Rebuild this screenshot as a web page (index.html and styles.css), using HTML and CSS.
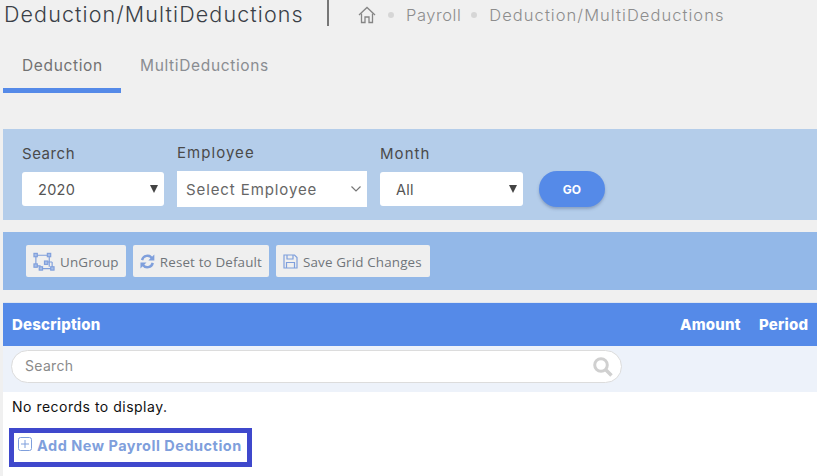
FILE: index.html
```html
<!DOCTYPE html>
<html lang="en">
<head>
<meta charset="utf-8">
<title>Deduction/MultiDeductions</title>
<link rel="stylesheet" href="styles.css">
</head>
<body>
<header class="head">
  <h1 class="title">Deduction/MultiDeductions</h1>
  <span class="divider"></span>
  <nav class="crumbs">
    <svg class="home" width="18" height="18" viewBox="0 0 18 18" fill="none" stroke="#858585" stroke-width="1.300"><path d="M1 9 9 1.5 17 9"/><path d="M3.5 7.5V16.500H7V11h4v5.500h3.500V7.500"/></svg>
    <span class="dot"></span><span>Payroll</span><span class="dot"></span><span class="crumb-long">Deduction/MultiDeductions</span>
  </nav>
</header>
<div class="tabs">
  <div class="tab active">Deduction</div>
  <div class="tab">MultiDeductions</div>
</div>
<section class="filters">
  <div class="field">
    <label class="lbl">Search</label>
    <div class="sel w142"><span>2020</span><i class="tri"></i></div>
  </div>
  <div class="field up">
    <label class="lbl lbl-wide">Employee</label>
    <div class="sel emp"><span>Select Employee</span>
      <svg width="10" height="6" viewBox="0 0 10 6" fill="none" stroke="#777" stroke-width="1.200"><path d="M.5.500 5 5 9.500.500"/></svg>
    </div>
  </div>
  <div class="field">
    <label class="lbl lbl-wide">Month</label>
    <div class="sel w143"><span>All</span><i class="tri"></i></div>
  </div>
  <button class="go">GO</button>
</section>
<section class="toolbar">
  <button class="tbtn tbtn-ungroup">
    <svg width="22" height="19" viewBox="0 0 23 19" fill="none" stroke="#7f9fdc" stroke-width="1.200"><path d="M3 3h14M3 3v11M3 14h5M17 3v12M8 17h12M20 10v7M12 10h8"/><g fill="#a9bfe8"><rect x="1" y="1" width="3.500" height="3.500"/><rect x="15" y="1" width="3.500" height="3.500"/><rect x="1" y="12" width="3.500" height="3.500"/><rect x="6.500" y="15" width="3.500" height="3.500"/><rect x="18.500" y="15" width="3.500" height="3.500"/><rect x="12" y="9" width="3.500" height="3.500"/></g></svg>
    UnGroup
  </button>
  <button class="tbtn tbtn-reset">
    <svg width="15" height="15" viewBox="0 0 16 16" fill="none" stroke="#7f9fdc" stroke-width="2.600"><path d="M2.200 6.500A6 6 0 0 1 13 4.500M13.800 9.500A6 6 0 0 1 3 11.500"/><path d="M15.500 .5v6.500H9zM.5 15.500V9H7z" fill="#7f9fdc" stroke="none"/></svg>
    Reset to Default
  </button>
  <button class="tbtn tbtn-save">
    <svg width="15" height="15" viewBox="0 0 15 15" fill="none" stroke="#7f9fdc" stroke-width="1.200"><path d="M1 1h10.500L14 3.500V14H1z"/><path d="M4 1v4h6V1M3.500 14V8.500h8V14"/></svg>
    Save Grid Changes
  </button>
</section>
<section class="grid">
  <div class="ghead"><span class="c-desc">Description</span><span class="c-amt">Amount</span><span class="c-per">Period</span></div>
  <div class="gsearch">
    <div class="sbox"><span class="sbox-text">Search</span>
      <svg width="20" height="20" viewBox="0 0 20 20" fill="none" stroke="#d0d0d0"><circle cx="8" cy="8" r="6.300" stroke-width="3"/><path d="M12.500 12.500 18.500 18.500" stroke-width="3.600"/></svg>
    </div>
  </div>
  <p class="empty">No records to display.</p>
  <div class="add">
    <svg width="14" height="14" viewBox="0 0 14 14" fill="none" stroke="#7f9fdc" stroke-width="1"><rect x=".5" y=".5" width="13" height="13" rx="2"/><path d="M7 3v8M3 7h8"/></svg>
    <span>Add New Payroll Deduction</span>
  </div>
</section>
</body>
</html>
```
FILE: styles.css
```css
* { box-sizing: border-box; }
html, body { margin: 0; height: 476px; overflow: hidden; }
body {
  width: 817px;
  background: #f0f0f0;
  padding-left: 3px;
  font-family: Inter, "Noto Sans", sans-serif;
  color: #444;
  display: flex;
  flex-direction: column;
}
.head { display: flex; align-items: flex-start; height: 42px; padding-left: 1px; }
.title {
  margin: 2px 0 0;
  font-size: 21.500px;
  font-weight: 300;
  line-height: 24px;
  color: #3a3f47;
  width: 299px;
  white-space: nowrap;
  letter-spacing: 1.1px;
}
.divider { width: 2px; height: 26px; background: #777; margin-left: 24px; }
.crumbs {
  display: flex;
  align-items: center;
  height: 30px;
  margin-left: 29px;
  font-size: 16.500px;
  font-weight: 300;
  color: #8d8d8d;
  letter-spacing: .55px;
  white-space: nowrap;
}
.crumb-long { letter-spacing: 1.05px; }
.home { margin-right: 12px; }
.dot { width: 6px; height: 6px; border-radius: 50%; background: #d6d6d6; margin-right: 12px; }
.crumbs span + .dot { margin-left: 10px; }
.tabs { display: flex; height: 51px; }
.tab {
  font-size: 15.500px;
  font-weight: 400;
  color: #8a8d92;
  padding-top: 14px;
  letter-spacing: .65px;
  margin-left: 19px;
  width: 150px;
}
.tab.active {
  width: 118px;
  margin-left: 0;
  padding-left: 19px;
  color: #727272;
  border-bottom: 5px solid #558ae8;
}
.filters {
  margin-top: 36px;
  height: 91px;
  background: #b4cdea;
  display: flex;
  align-items: flex-start;
  padding: 16px 0 0 19px;
}
.field { display: flex; flex-direction: column; margin-right: 13px; }
.field.up { margin-top: -1px; }
.lbl { font-size: 15px; line-height: 18px; color: #4a4a4a; letter-spacing: .55px; margin-bottom: 9px; }
.lbl-wide { letter-spacing: 1.05px; }
.sel {
  height: 34px;
  background: #fff;
  border-radius: 3px;
  display: flex;
  align-items: center;
  justify-content: space-between;
  font-size: 14.500px;
  color: #555;
  letter-spacing: .3px;
  padding: 0 4px 0 16px;
}
.w142 { width: 142px; }
.w143 { width: 143px; }
.emp { width: 190px; height: 36px; border-radius: 0; padding: 0 6px 0 9px; color: #666; font-size: 15px; letter-spacing: .9px; }
.tri {
  width: 0; height: 0;
  border-left: 4px solid transparent;
  border-right: 4px solid transparent;
  border-top: 8px solid #444;
  margin-right: 2px;
}
.go {
  width: 66px;
  height: 36px;
  margin: 26px 0 0 3px;
  border: 0;
  border-radius: 18px;
  background: #558ae8;
  color: #fff;
  font: 700 12px Inter, sans-serif;
  box-shadow: 0 2px 3px rgba(60, 80, 120, .35);
}
.toolbar {
  margin-top: 12px;
  height: 58px;
  background: #93b8e8;
  display: flex;
  align-items: center;
  gap: 7px;
  padding-left: 23px;
}
.tbtn {
  height: 32px;
  padding: 1px 7px 0;
  display: flex;
  align-items: center;
  gap: 5px;
  background: #efefef;
  border: 0;
  border-radius: 2px;
  font: 400 13.400px "Open Sans", sans-serif;
  letter-spacing: .15px;
  color: #70757a;
  white-space: nowrap;
}
.tbtn-ungroup { width: 100px; }
.tbtn-reset { width: 136px; }
.tbtn-save { width: 154px; }
.grid { margin-top: 12px; flex: 1; background: #fff; }
.ghead {
  height: 44px;
  background: #558ae8;
  color: #fff;
  font-weight: 800;
  font-size: 15px;
  letter-spacing: .2px;
  display: flex;
  align-items: center;
  padding-left: 9px;
  border-top: 1px solid #dfe6f0;
  white-space: nowrap;
}
.c-desc { flex: 1; }
.c-amt { width: 79px; }
.c-per { width: 58px; }
.gsearch { height: 46px; background: #edf2fa; padding: 4px 0 0 8px; }
.sbox {
  width: 611px;
  height: 33px;
  background: #fff;
  border: 1px solid #dcdcdc;
  border-radius: 17px;
  display: flex;
  align-items: center;
  justify-content: space-between;
  padding: 0 8px 0 13px;
  font-size: 14px;
  color: #8a8a8a;
  letter-spacing: .3px;
}
.sbox-text { margin-top: -2px; }
.empty { margin: 6px 0 0 9px; font-size: 14px; line-height: 18px; color: #111; letter-spacing: .5px; }
.add {
  margin: 12px 0 0 6px;
  width: 243px;
  height: 39px;
  border: 5px solid #3f48cc;
  display: flex;
  align-items: center;
  gap: 5px;
  padding: 0 0 5px 4px;
  font-size: 14.500px;
  font-weight: 700;
  color: #7f9fdc;
  letter-spacing: .5px;
  white-space: nowrap;
}
.add svg { margin-top: -2px; }
```
